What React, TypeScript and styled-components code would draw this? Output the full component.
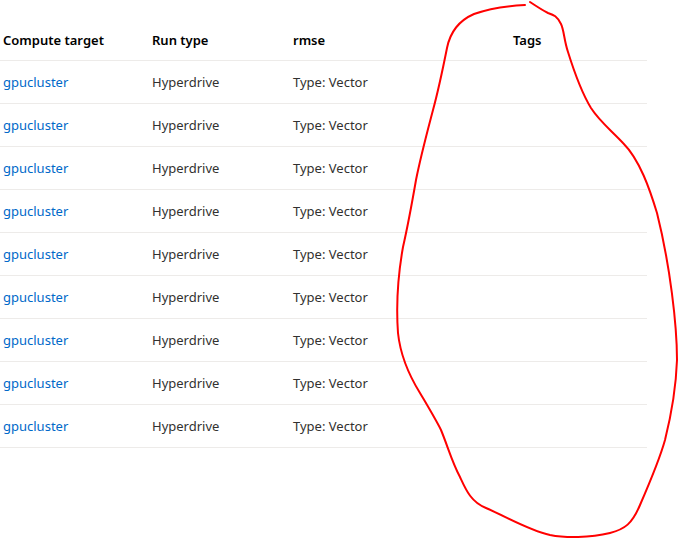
import React from 'react';
import styled, { createGlobalStyle } from 'styled-components';

const GlobalStyle = createGlobalStyle`
  html, body {
    margin: 0;
    padding: 0;
    background: #fff;
  }
  body {
    font-family: 'Noto Sans', 'Open Sans', sans-serif;
    width: 679px;
    height: 539px;
    overflow: hidden;
  }
`;

const Page = styled.div`
  position: relative;
  width: 679px;
  height: 539px;
`;

const Table = styled.div`
  width: 647px;
  display: grid;
  grid-template-columns: 149px 141px 220px 137px;
`;

const HeaderCell = styled.div`
  height: 40px;
  padding: 20px 0 0 3px;
  display: flex;
  align-items: center;
  font-size: 13px;
  font-weight: 600;
  color: #000;
  border-bottom: 1px solid #edebe9;
`;

const Cell = styled.div`
  height: 42px;
  padding-left: 3px;
  display: flex;
  align-items: center;
  font-size: 13px;
  color: #323130;
  border-bottom: 1px solid #edebe9;
`;

const LinkText = styled.a`
  color: #0069c9;
  text-decoration: none;
  cursor: pointer;
`;

const Scribble = styled.svg`
  position: absolute;
  left: 0;
  top: 0;
  pointer-events: none;
`;

const rows = Array.from({ length: 9 }, () => ({
  target: 'gpucluster',
  runType: 'Hyperdrive',
  rmse: 'Type: Vector',
}));

export default function App() {
  return (
    <Page>
      <GlobalStyle />
      <Table>
        <HeaderCell>Compute target</HeaderCell>
        <HeaderCell>Run type</HeaderCell>
        <HeaderCell>rmse</HeaderCell>
        <HeaderCell>Tags</HeaderCell>
        {rows.map((r, i) => (
          <React.Fragment key={i}>
            <Cell>
              <LinkText>{r.target}</LinkText>
            </Cell>
            <Cell>{r.runType}</Cell>
            <Cell>{r.rmse}</Cell>
            <Cell />
          </React.Fragment>
        ))}
      </Table>
      <Scribble width="679" height="539" viewBox="0 0 679 539">
        <path
          d="M525 5 C505 6 488 9 474 14 C458 21 450 33 447 48 C443 68 439 88 433 110 C427 133 421 155 416 180 C412 203 408 225 403 247 C398 275 396 305 398 333 C400 352 407 372 420 393 C430 410 436 420 441 430 C448 447 452 462 460 477 C466 490 471 502 486 508 C505 516 528 530 550 535 C565 538 590 538 610 533 C625 529 632 524 640 505 C650 482 660 458 665 440 C672 412 676 388 677 360 C677 325 670 265 657 213 C650 190 640 160 623 143 C612 131 600 122 591 108 C580 90 573 68 568 52 C564 40 564 30 561 24 C557 16 554 15 548 13 C542 10 536 6 530 2"
          fill="none"
          stroke="#f00"
          strokeWidth="2"
          strokeLinecap="round"
        />
      </Scribble>
    </Page>
  );
}
